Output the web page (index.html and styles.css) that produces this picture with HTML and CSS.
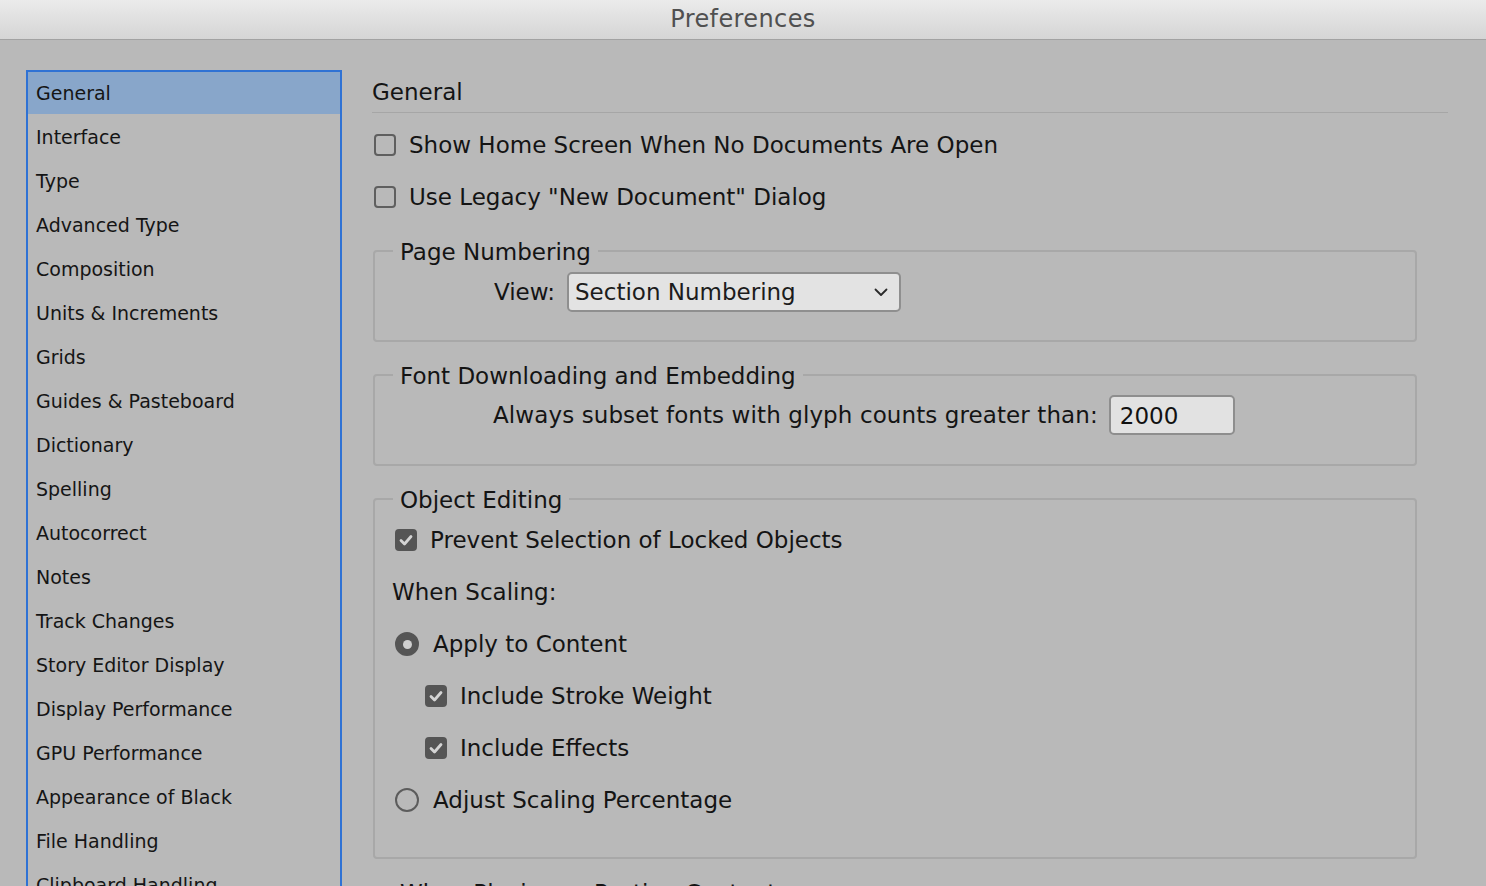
FILE: index.html
```html
<!DOCTYPE html>
<html>
<head>
<meta charset="utf-8">
<title>Preferences</title>
<link rel="stylesheet" href="styles.css">
</head>
<body>
<div class="titlebar">Preferences</div>
<div class="main">
  <ul class="sidebar">
    <li class="item selected">General</li>
    <li class="item">Interface</li>
    <li class="item">Type</li>
    <li class="item">Advanced Type</li>
    <li class="item">Composition</li>
    <li class="item">Units &amp; Increments</li>
    <li class="item">Grids</li>
    <li class="item">Guides &amp; Pasteboard</li>
    <li class="item">Dictionary</li>
    <li class="item">Spelling</li>
    <li class="item">Autocorrect</li>
    <li class="item">Notes</li>
    <li class="item">Track Changes</li>
    <li class="item">Story Editor Display</li>
    <li class="item">Display Performance</li>
    <li class="item">GPU Performance</li>
    <li class="item">Appearance of Black</li>
    <li class="item">File Handling</li>
    <li class="item">Clipboard Handling</li>
  </ul>
  <div class="content">
    <div class="heading">General</div>
    <div class="row top-row"><span class="check"></span><span>Show Home Screen When No Documents Are Open</span></div>
    <div class="row top-row"><span class="check"></span><span>Use Legacy "New Document" Dialog</span></div>

    <fieldset class="group group-page">
      <legend>Page Numbering</legend>
      <div class="field-row">
        <span class="view-label">View:</span>
        <div class="select"><span>Section Numbering</span>
          <svg class="chev" width="14" height="9" viewBox="0 0 14 9"><path d="M1.5 1.5 L7 7 L12.5 1.5" fill="none" stroke="#2a2a2a" stroke-width="1.8" stroke-linecap="round" stroke-linejoin="round"/></svg>
        </div>
      </div>
    </fieldset>

    <fieldset class="group group-font">
      <legend>Font Downloading and Embedding</legend>
      <div class="field-row font-row">
        <span class="subset-label">Always subset fonts with glyph counts greater than:</span>
        <div class="textbox">2000</div>
      </div>
    </fieldset>

    <fieldset class="group group-object">
      <legend>Object Editing</legend>
      <div class="row obj-row"><span class="check checked"><svg width="22" height="22" viewBox="0 0 22 22"><path d="M6 11.5 L9.5 15 L16 7.5" fill="none" stroke="#d4d4d4" stroke-width="2.8" stroke-linecap="round" stroke-linejoin="round"/></svg></span><span>Prevent Selection of Locked Objects</span></div>
      <div class="row obj-label">When Scaling:</div>
      <div class="row obj-row"><span class="radio on"><span class="dot"></span></span><span class="radio-text">Apply to Content</span></div>
      <div class="row obj-row nested"><span class="check checked"><svg width="22" height="22" viewBox="0 0 22 22"><path d="M6 11.5 L9.5 15 L16 7.5" fill="none" stroke="#d4d4d4" stroke-width="2.8" stroke-linecap="round" stroke-linejoin="round"/></svg></span><span>Include Stroke Weight</span></div>
      <div class="row obj-row nested"><span class="check checked"><svg width="22" height="22" viewBox="0 0 22 22"><path d="M6 11.5 L9.5 15 L16 7.5" fill="none" stroke="#d4d4d4" stroke-width="2.8" stroke-linecap="round" stroke-linejoin="round"/></svg></span><span>Include Effects</span></div>
      <div class="row obj-row"><span class="radio"></span><span class="radio-text">Adjust Scaling Percentage</span></div>
    </fieldset>

    <fieldset class="group group-paste">
      <legend>When Placing or Pasting Content</legend>
      <div class="row obj-row">&nbsp;</div>
    </fieldset>
  </div>
</div>
</body>
</html>
```
FILE: styles.css
```css
html, body {
  margin: 0;
  padding: 0;
  height: 100%;
  overflow: hidden;
}
body {
  background: #b9b9b9;
  font-family: "DejaVu Sans", "Liberation Sans", sans-serif;
  color: #141414;
}
.titlebar {
  height: 39px;
  line-height: 39px;
  border-bottom: 1px solid #a2a2a2;
  background: linear-gradient(#ebebeb, #d5d5d5);
  text-align: center;
  font-size: 24px;
  letter-spacing: 0.4px;
  color: #505050;
}
.main {
  display: flex;
  align-items: flex-start;
}
.sidebar {
  list-style: none;
  margin: 30px 0 0 26px;
  padding: 0;
  width: 312px;
  border: 2px solid #2f72d4;
  flex: none;
}
.item {
  height: 44px;
  line-height: 42px;
  padding-left: 8px;
  font-size: 19px;
  color: #151515;
  white-space: nowrap;
}
.item.selected {
  height: 42px;
  margin-bottom: 2px;
  background: #88a6ca;
}
.content {
  flex: none;
  width: 1076px;
  margin: 30px 0 0 30px;
  font-size: 23px;
}
.heading {
  height: 42px;
  line-height: 44px;
  border-bottom: 1px solid #a6a6a6;
  color: #141414;
}
.row {
  display: flex;
  align-items: center;
  height: 52px;
  white-space: nowrap;
}
.top-row {
  padding-left: 2px;
}
.heading + .row {
  margin-top: 6px;
}
.check {
  width: 22px;
  height: 22px;
  box-sizing: border-box;
  border: 2px solid #5f5f5f;
  border-radius: 4px;
  margin-right: 13px;
  flex: none;
  display: flex;
  align-items: center;
  justify-content: center;
}
.check.checked {
  background: #555555;
  border-color: #555555;
}
.check.checked svg {
  display: block;
  flex: none;
}
.radio {
  width: 24px;
  height: 24px;
  box-sizing: border-box;
  border: 2px solid #5c5c5c;
  border-radius: 50%;
  margin-right: 13px;
  flex: none;
  display: flex;
  align-items: center;
  justify-content: center;
}
.radio.on {
  background: #555555;
  border-color: #555555;
}
.dot {
  width: 9px;
  height: 9px;
  border-radius: 50%;
  background: #cfcfcf;
}
.group {
  margin: 0 31px 0 1px;
  padding: 0;
  border: 2px solid #a8a8a8;
  border-radius: 4px;
}
.group legend {
  margin-left: 18px;
  padding: 0 7px;
  height: 30px;
  line-height: 32px;
  font-size: 23px;
  color: #141414;
}
.group-page {
  margin-top: 13px;
  padding-bottom: 28px;
}
.group-font {
  margin-top: 18px;
  padding-bottom: 29px;
}
.group-object {
  margin-top: 18px;
  padding-bottom: 31px;
}
.group-paste {
  margin-top: 18px;
}
.field-row {
  display: flex;
  align-items: center;
  white-space: nowrap;
}
.group-page .field-row {
  margin-top: 6px;
}
.view-label {
  width: 180px;
  text-align: right;
  margin-right: 12px;
  flex: none;
}
.select {
  width: 334px;
  height: 40px;
  box-sizing: border-box;
  border: 2px solid #8f8f8f;
  border-radius: 5px;
  background: #e3e3e3;
  display: flex;
  align-items: center;
  justify-content: space-between;
  padding: 0 11px 0 6px;
  color: #1c1c1c;
}
.chev {
  display: block;
}
.font-row {
  margin-top: 5px;
  padding-left: 118px;
}
.subset-label {
  letter-spacing: 0.1px;
}
.textbox {
  width: 126px;
  height: 40px;
  box-sizing: border-box;
  border: 2px solid #8e8e8e;
  border-radius: 5px;
  background: #e2e2e2;
  margin-left: 11px;
  line-height: 38px;
  padding-left: 9px;
  color: #111;
}
.obj-row {
  padding-left: 20px;
}
.obj-label {
  padding-left: 17px;
}
.nested {
  padding-left: 50px;
}
.radio-text {
  margin-left: 1px;
}
```
